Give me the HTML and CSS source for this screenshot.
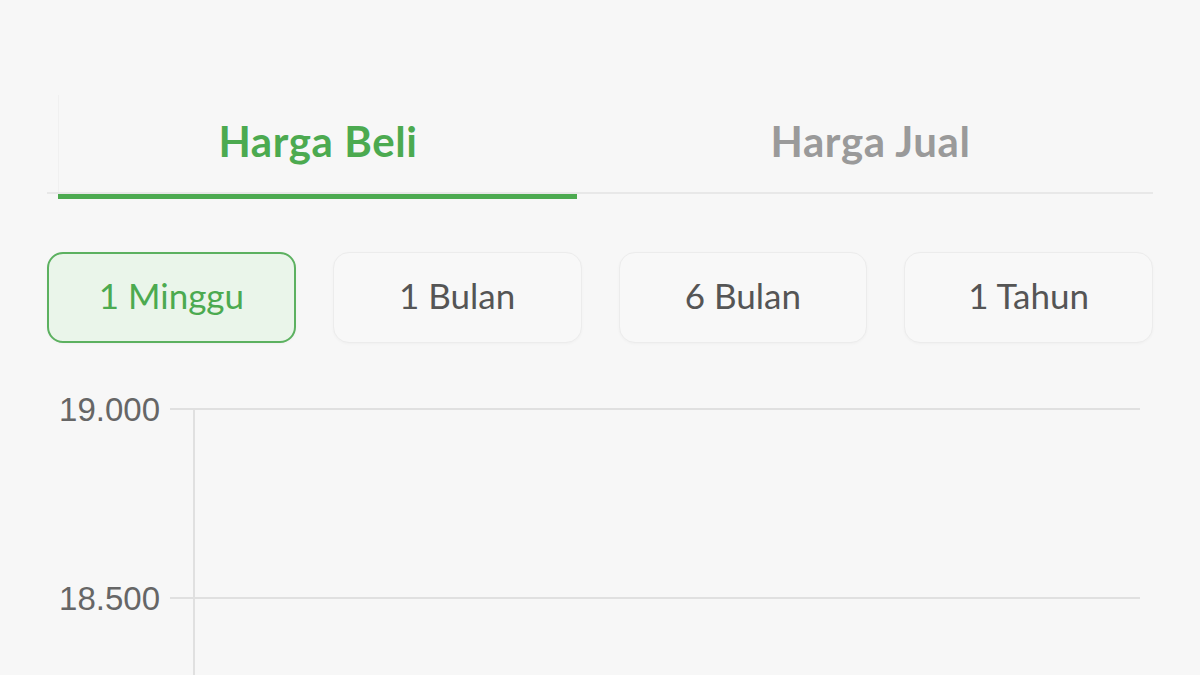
FILE: index.html
```
<!DOCTYPE html>
<html lang="id">

<head>
    <meta charset="UTF-8">
    <meta name="viewport" content="width=device-width, initial-scale=1">
    <title>Grafik Harga</title>
    <link rel="stylesheet" href="styles.css">
</head>

<body>

    <!-- Tab harga -->
    <div class="tabs">
        <div class="tab-row">
            <div class="tab active">Harga Beli</div>
            <div class="tab">Harga Jual</div>
        </div>
        <div class="tab-indicator"></div>
    </div>

    <!-- Pilihan periode -->
    <div class="periods">
        <button class="period selected">1 Minggu</button>
        <button class="period">1 Bulan</button>
        <button class="period">6 Bulan</button>
        <button class="period">1 Tahun</button>
    </div>

    <!-- Grafik -->
    <div class="chart">
        <div class="chart-row">
            <span class="y-label">19.000</span>
            <span class="tick"></span>
            <div class="plot"></div>
        </div>
        <div class="chart-row">
            <span class="y-label">18.500</span>
            <span class="tick"></span>
            <div class="plot"></div>
        </div>
    </div>

</body>

</html>
```

FILE: styles.css
```
body {
    font-family: 'Lato', 'Noto Sans', sans-serif;
    background-color: #f7f7f7;
    margin: 0;
    padding: 0;
    width: 1200px;
    height: 675px;
    overflow: hidden;
}

.tabs {
    margin: 95px 47px 0;
}

.tab-row {
    display: grid;
    grid-template-columns: 519px 1fr;
    padding-left: 11px;
    height: 97px;
    border-bottom: 2px solid #e8e8e8;
}

.tab {
    display: flex;
    align-items: center;
    justify-content: center;
    padding-bottom: 6px;
    font-size: 42px;
    font-weight: bold;
    letter-spacing: 0.6px;
    color: #9a9a9a;
    margin-right: -11px;
}

.tab.active {
    color: #4caa50;
    margin-right: 0;
    border-left: 1px solid #f0f0f0;
}

.tab-indicator {
    width: 519px;
    height: 5px;
    margin-left: 11px;
    background-color: #4caa50;
}

.periods {
    display: grid;
    grid-template-columns: repeat(4, 1fr);
    gap: 37px;
    margin: 53px 47px 0;
}

.period {
    height: 91px;
    border: 1.5px solid #ececec;
    border-radius: 16px;
    background-color: #f8f8f8;
    box-shadow: 0 1px 3px rgba(0, 0, 0, 0.03);
    font-family: 'Lato', 'Noto Sans', sans-serif;
    font-size: 35px;
    color: #555;
    padding: 0 0 5px;
}

.period.selected {
    border: 2px solid #5cb160;
    background-color: #eaf5ea;
    color: #4caa50;
}

.chart {
    margin-top: 65px;
}

.chart-row {
    display: flex;
    height: 189px;
}

.y-label {
    width: 160px;
    text-align: right;
    font-family: 'Liberation Sans', Arial, sans-serif;
    font-size: 33px;
    line-height: 34px;
    margin-top: -15px;
    color: #666;
}

.tick {
    width: 23px;
    margin-left: 10px;
    border-top: 2px solid #e0e0e0;
}

.plot {
    width: 945px;
    border-top: 2px solid #e0e0e0;
    border-left: 2px solid #e0e0e0;
}
```
